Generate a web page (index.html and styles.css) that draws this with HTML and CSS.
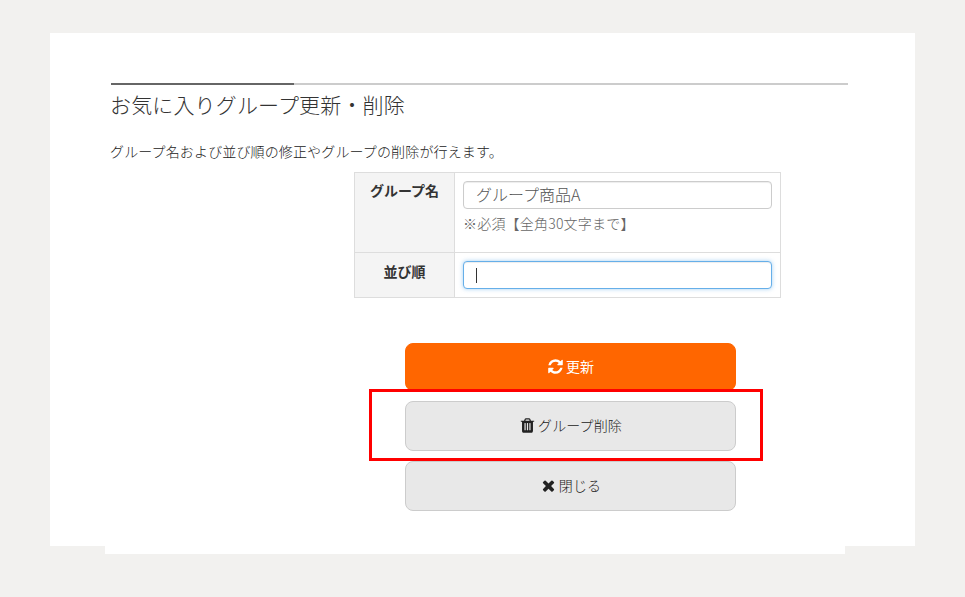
FILE: index.html
```html
<!DOCTYPE html>
<html lang="ja">
<head>
<meta charset="utf-8">
<title>お気に入りグループ更新・削除</title>
<link rel="stylesheet" href="styles.css">
</head>
<body>
<div class="page">
  <main class="card">
    <h2 class="title">お気に入りグループ更新・削除</h2>
    <p class="lead">グループ名および並び順の修正やグループの削除が行えます。</p>
    <table class="form">
      <tr class="row-name">
        <th>グループ名</th>
        <td>
          <div class="field">グループ商品A</div>
          <p class="note">※必須【全角30文字まで】</p>
        </td>
      </tr>
      <tr class="row-order">
        <th>並び順</th>
        <td><div class="field focused"><span class="caret"></span></div></td>
      </tr>
    </table>
    <div class="actions">
      <button class="btn primary" type="button">
        <svg class="icon" viewBox="0 0 1792 1792"><path d="M1639 1056q0 5-1 7-64 268-268 434.5t-478 166.5q-146 0-282.5-55t-243.5-157l-129 129q-19 19-45 19t-45-19-19-45v-448q0-26 19-45t45-19h448q26 0 45 19t19 45-19 45l-137 137q71 66 161 102t187 36q134 0 250-65t186-179q11-17 53-117 8-23 30-23h192q13 0 22.5 9.5t9.5 22.5zm25-800v448q0 26-19 45t-45 19h-448q-26 0-45-19t-19-45 19-45l138-138q-148-137-349-137-134 0-250 65t-186 179q-11 17-53 117-8 23-30 23h-199q-13 0-22.5-9.5t-9.5-22.5v-7q65-268 270-434.5t480-166.5q146 0 284 55.5t245 156.5l130-129q19-19 45-19t45 19 19 45z"/></svg>更新
      </button>
      <button class="btn" type="button">
        <svg class="icon" viewBox="0 0 1792 1792"><path d="M704 1376v-704q0-14-9-23t-23-9h-64q-14 0-23 9t-9 23v704q0 14 9 23t23 9h64q14 0 23-9t9-23zm256 0v-704q0-14-9-23t-23-9h-64q-14 0-23 9t-9 23v704q0 14 9 23t23 9h64q14 0 23-9t9-23zm256 0v-704q0-14-9-23t-23-9h-64q-14 0-23 9t-9 23v704q0 14 9 23t23 9h64q14 0 23-9t9-23zm-544-992h448l-48-117q-7-9-17-11h-317q-10 2-17 11zm928 32v64q0 14-9 23t-23 9h-96v948q0 83-47 143.5t-113 60.5h-832q-66 0-113-58.5t-47-141.5v-952h-96q-14 0-23-9t-9-23v-64q0-14 9-23t23-9h309l70-167q15-37 54-63t79-26h320q40 0 79 26t54 63l70 167h309q14 0 23 9t9 23z"/></svg>グループ削除
      </button>
      <button class="btn" type="button">
        <svg class="icon" viewBox="0 0 1792 1792"><path d="M1490 1322q0 40-28 68l-136 136q-28 28-68 28t-68-28l-294-294-294 294q-28 28-68 28t-68-28l-136-136q-28-28-28-68t28-68l294-294-294-294q-28-28-28-68t28-68l136-136q28-28 68-28t68 28l294 294 294-294q28-28 68-28t68 28l136 136q28 28 28 68t-28 68l-294 294 294 294q28 28 28 68z"/></svg>閉じる
      </button>
      <div class="highlight"></div>
    </div>
  </main>
  <div class="card-foot"></div>
</div>
</body>
</html>
```
FILE: styles.css
```css
* { box-sizing: border-box; }
html, body { margin: 0; height: 100%; }
body {
  background: #f2f1ef;
  color: #333;
  font-family: "Noto Sans CJK JP", "Noto Sans", sans-serif;
  font-size: 14px;
  overflow: hidden;
}
.page { padding: 33px 50px 0; }
.card {
  background: #fff;
  height: 513px;
  padding: 50px 67px 0 61px;
}
.card-foot {
  background: #fff;
  height: 8px;
  margin: 0 70px 0 55px;
}
.title {
  position: relative;
  margin: 0;
  border-top: 2px solid #ccc;
  padding-top: 4px;
  font-size: 21px;
  font-weight: 300;
  letter-spacing: .15px;
  line-height: 30px;
  color: #333;
  text-indent: -1px;
}
.title::before {
  content: "";
  position: absolute;
  left: 0;
  top: -2px;
  width: 183px;
  height: 2px;
  background: #666;
}
.lead {
  margin: 22px 0 0;
  height: 20px;
  font-size: 14px;
  font-weight: 300;
  letter-spacing: .14px;
  line-height: 20px;
  color: #222;
  text-indent: -1px;
}
.form {
  margin: 11px 0 0 243px;
  width: 427px;
  border-collapse: collapse;
  table-layout: fixed;
}
.form th, .form td {
  border: 1px solid #ddd;
  padding: 8px;
  vertical-align: top;
}
.form th {
  width: 100px;
  background: #f4f4f4;
  font-size: 14px;
  font-weight: 700;
  line-height: 20px;
  text-align: center;
  padding: 7px 8px 0;
}
.row-name { height: 80px; }
.row-order { height: 45px; }
.form .row-order th { padding-top: 8px; }
.field {
  display: flex;
  align-items: center;
  height: 28px;
  padding: 0 12px 2px;
  border: 1px solid #ccc;
  border-radius: 4px;
  background: #fff;
  color: #555;
  font-size: 16px;
  font-weight: 300;
  box-shadow: inset 0 1px 1px rgba(0,0,0,.075);
}
.field.focused {
  padding-bottom: 0;
  border-color: #66afe9;
  box-shadow: inset 0 1px 1px rgba(0,0,0,.075), 0 0 4px rgba(102,175,233,.6);
}
.caret {
  display: block;
  width: 1px;
  height: 15px;
  background: #333;
}
.note {
  margin: 5px 0 0;
  font-size: 14px;
  font-weight: 300;
  letter-spacing: .2px;
  line-height: 18px;
  color: #666;
}
.actions {
  position: relative;
  margin: 45px 0 0 294px;
  width: 331px;
  display: flex;
  flex-direction: column;
  gap: 10px;
}
.btn {
  display: flex;
  align-items: center;
  justify-content: center;
  gap: 2px;
  width: 100%;
  height: 50px;
  margin: 0;
  padding: 0 0 2px;
  border: 1px solid #ccc;
  border-radius: 8px;
  background: #e8e8e8;
  color: #222;
  font-family: inherit;
  font-size: 14px;
  font-weight: 300;
  letter-spacing: .1px;
}
.btn.primary {
  height: 48px;
  border-color: #f60;
  background: #f60;
  color: #fff;
  font-weight: 400;
}
.icon {
  width: 17px;
  height: 17px;
  fill: currentColor;
  flex: none;
}
.highlight {
  position: absolute;
  left: -36px;
  top: 46px;
  width: 394px;
  height: 72px;
  border: 3px solid #f00;
}
```
